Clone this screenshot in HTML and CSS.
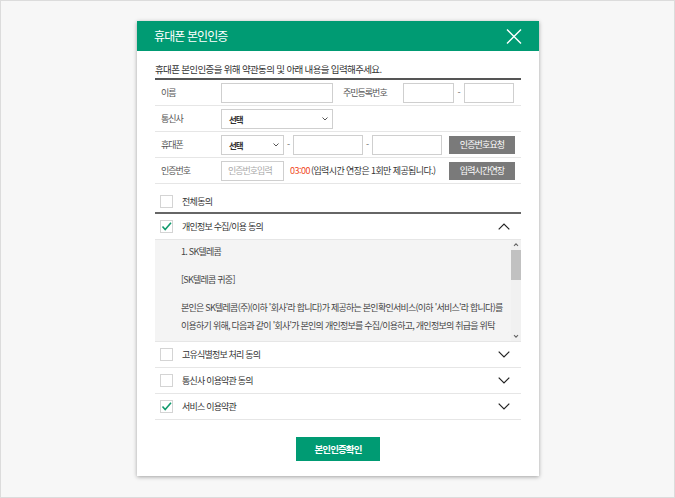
FILE: index.html
```html
<!DOCTYPE html>
<html lang="ko">
<head>
<meta charset="utf-8">
<title>휴대폰 본인인증</title>
<link rel="stylesheet" href="styles.css">
</head>
<body>
<div class="screen">
  <div class="modal">
    <div class="modal-head">
      <h1 class="modal-title">휴대폰 본인인증</h1>
      <button class="close" type="button" aria-label="닫기">
        <svg width="16" height="15" viewBox="0 0 16 15"><path d="M1 0.5L15 14.5M15 0.5L1 14.5" stroke="#fff" stroke-width="1.4" fill="none"/></svg>
      </button>
    </div>
    <div class="modal-body">
      <p class="intro">휴대폰 본인인증을 위해 약관동의 및 아래 내용을 입력해주세요.</p>
      <div class="form">
        <div class="row">
          <span class="label">이름</span>
          <input class="field w-name" type="text">
          <span class="label label-2">주민등록번호</span>
          <input class="field w-j1" type="text">
          <span class="dash dash-j">-</span>
          <input class="field w-j2" type="text">
        </div>
        <div class="row">
          <span class="label">통신사</span>
          <div class="select w-name"><span>선택</span>
            <svg width="6" height="4" viewBox="0 0 6 4"><path d="M0.5 0.5L3 3L5.5 0.5" stroke="#555" stroke-width="1" fill="none"/></svg>
          </div>
        </div>
        <div class="row">
          <span class="label">휴대폰</span>
          <div class="select w-sel"><span>선택</span>
            <svg width="6" height="4" viewBox="0 0 6 4"><path d="M0.5 0.5L3 3L5.5 0.5" stroke="#555" stroke-width="1" fill="none"/></svg>
          </div>
          <span class="dash">-</span>
          <input class="field w-ph" type="text">
          <span class="dash">-</span>
          <input class="field w-ph" type="text">
          <button class="gray-btn" type="button">인증번호요청</button>
        </div>
        <div class="row">
          <span class="label">인증번호</span>
          <input class="field w-sel" type="text" placeholder="인증번호입력">
          <span class="timer">03:00</span>
          <span class="note">(입력시간 연장은 1회만 제공됩니다.)</span>
          <button class="gray-btn push" type="button">입력시간연장</button>
        </div>
      </div>

      <div class="agree-all">
        <span class="check"></span>
        <span class="agree-text">전체동의</span>
      </div>

      <div class="term">
        <span class="check">
          <svg width="11" height="11" viewBox="0 0 11 11"><path d="M1.5 5.5L4.2 8.6L10 1.8" stroke="#139b6e" stroke-width="1.6" fill="none"/></svg>
        </span>
        <span class="term-text">개인정보 수집/이용 동의</span>
        <svg class="chev" width="12" height="7" viewBox="0 0 12 7"><path d="M0.7 6.3L6 1L11.3 6.3" stroke="#222" stroke-width="1.2" fill="none"/></svg>
      </div>
      <div class="term-content">
        <div class="term-scroll">
          <p>1. SK텔레콤</p>
          <p>[SK텔레콤 귀중]</p>
          <p>본인은 SK텔레콤(주)(이하 '회사'라 합니다)가 제공하는 본인확인서비스(이하 '서비스'라 합니다)를<br>이용하기 위해, 다음과 같이 '회사'가 본인의 개인정보를 수집/이용하고, 개인정보의 취급을 위탁</p>
        </div>
        <div class="scrollbar" aria-hidden="true">
          <svg class="sb-btn" width="10" height="10" viewBox="0 0 10 10"><path d="M3 5.8L5 3.8L7 5.8" stroke="#666" stroke-width="1.1" fill="none"/></svg>
          <div class="sb-thumb"></div>
          <div class="sb-track"></div>
          <svg class="sb-btn" width="10" height="10" viewBox="0 0 10 10"><path d="M3 4.2L5 6.2L7 4.2" stroke="#666" stroke-width="1.1" fill="none"/></svg>
        </div>
      </div>

      <div class="term">
        <span class="check"></span>
        <span class="term-text">고유식별정보 처리 동의</span>
        <svg class="chev" width="12" height="7" viewBox="0 0 12 7"><path d="M0.7 0.7L6 6L11.3 0.7" stroke="#222" stroke-width="1.2" fill="none"/></svg>
      </div>
      <div class="term">
        <span class="check"></span>
        <span class="term-text">통신사 이용약관 동의</span>
        <svg class="chev" width="12" height="7" viewBox="0 0 12 7"><path d="M0.7 0.7L6 6L11.3 0.7" stroke="#222" stroke-width="1.2" fill="none"/></svg>
      </div>
      <div class="term">
        <span class="check">
          <svg width="11" height="11" viewBox="0 0 11 11"><path d="M1.5 5.5L4.2 8.6L10 1.8" stroke="#139b6e" stroke-width="1.6" fill="none"/></svg>
        </span>
        <span class="term-text">서비스 이용약관</span>
        <svg class="chev" width="12" height="7" viewBox="0 0 12 7"><path d="M0.7 0.7L6 6L11.3 0.7" stroke="#222" stroke-width="1.2" fill="none"/></svg>
      </div>

      <div class="actions">
        <button class="confirm" type="button">본인인증확인</button>
      </div>
    </div>
  </div>
</div>
</body>
</html>
```

FILE: styles.css
```css
* { box-sizing: border-box; }
html, body { margin: 0; padding: 0; }
body {
  font-family: "Noto Sans CJK KR", "Noto Sans", sans-serif;
  color: #333;
}
.screen {
  width: 675px;
  height: 498px;
  border: 1px solid #dcdcdc;
  background: #f7f7f7;
  padding: 20px 0 0 136px;
}
.modal {
  width: 402px;
  background: #fff;
  box-shadow: 0 1px 4px rgba(0, 0, 0, 0.35);
}
.modal-head {
  height: 30px;
  background: #009b73;
  display: flex;
  align-items: center;
  justify-content: space-between;
  padding: 0 17px;
}
.modal-title {
  margin: 0;
  font-size: 12px;
  font-weight: 400;
  letter-spacing: -0.9px;
  color: #fff;
  line-height: 30px;
}
.close {
  border: 0;
  padding: 0;
  background: none;
  width: 16px;
  height: 15px;
  display: flex;
}
.modal-body {
  padding: 0 18px 15px;
}
.intro {
  margin: 10px 0 0;
  font-size: 9.5px;
  letter-spacing: -0.65px;
  line-height: 16px;
  padding-bottom: 1px;
  border-bottom: 2px solid #555;
  color: #333;
}
.row {
  display: flex;
  align-items: center;
  height: 26px;
  border-bottom: 1px solid #e6e6e6;
  font-size: 9px;
  letter-spacing: -0.8px;
}
.label {
  flex: none;
  width: 66px;
  padding-left: 6px;
  color: #555;
  letter-spacing: -1px;
}
.label-2 { margin-left: 4px; }
.field {
  flex: none;
  height: 20px;
  border: 1px solid #cfcfcf;
  background: #fff;
  padding: 0 6px;
  margin: 0;
  font-family: inherit;
  font-size: 9px;
  letter-spacing: -1px;
  color: #333;
  outline: none;
}
.field::placeholder { color: #aaa; }
.w-name { width: 112px; }
.w-j1 { width: 51px; }
.w-j2 { width: 50px; }
.w-sel { width: 63px; }
.w-ph { width: 70px; }
.dash {
  flex: none;
  width: 9px;
  text-align: center;
  color: #666;
  letter-spacing: 0;
}
.dash-j { width: 10px; }
.select {
  flex: none;
  height: 20px;
  border: 1px solid #cfcfcf;
  display: flex;
  align-items: center;
  justify-content: space-between;
  padding: 0 4px 0 7px;
  font-size: 8.5px;
  font-weight: 700;
  color: #333;
  letter-spacing: -1.1px;
}
.gray-btn {
  flex: none;
  width: 66px;
  height: 18px;
  margin-left: 7px;
  border: 0;
  padding: 0;
  background: #7a7a7a;
  color: #fff;
  font-family: inherit;
  font-size: 9px;
  letter-spacing: -0.9px;
}
.gray-btn.push { margin-left: auto; margin-right: 6px; }
.timer {
  margin-left: 6px;
  color: #f04a24;
  letter-spacing: -0.5px;
}
.note {
  margin-left: 1px;
  color: #333;
  letter-spacing: -0.6px;
}
.agree-all {
  display: flex;
  align-items: center;
  height: 30px;
  padding: 6px 0 0 5px;
  border-bottom: 2px solid #666;
}
.check {
  flex: none;
  width: 13px;
  height: 13px;
  border: 1px solid #d4d4d4;
  background: #fff;
  margin-right: 9px;
  display: flex;
  align-items: center;
  justify-content: center;
}
.agree-text {
  font-size: 9px;
  letter-spacing: -0.7px;
  color: #333;
}
.term-text {
  font-size: 9px;
  letter-spacing: -0.8px;
  color: #333;
}
.term {
  display: flex;
  align-items: center;
  height: 26px;
  padding: 0 11px 0 5px;
  border-bottom: 1px solid #e6e6e6;
}
.chev { margin-left: auto; }
.term-content {
  display: flex;
  height: 102px;
  background: #f4f4f4;
  border-bottom: 1px solid #e6e6e6;
}
.term-scroll {
  flex: 1;
  min-width: 0;
  overflow: hidden;
  padding: 3px 0 0 26px;
  font-size: 9px;
  letter-spacing: -0.75px;
  line-height: 18px;
  color: #444;
}
.term-scroll p {
  margin: 0 0 10px;
  white-space: nowrap;
}
.scrollbar {
  flex: none;
  width: 10px;
  display: flex;
  flex-direction: column;
  background: #f1f1f1;
}
.sb-btn { flex: none; display: block; }
.sb-thumb {
  flex: none;
  height: 30px;
  background: #c1c1c1;
}
.sb-track { flex: 1; }
.actions {
  display: flex;
  justify-content: center;
  padding-top: 17px;
}
.confirm {
  width: 84px;
  height: 24px;
  border: 0;
  padding: 0;
  background: #009b73;
  color: #fff;
  font-family: inherit;
  font-size: 9.5px;
  font-weight: 700;
  letter-spacing: -0.9px;
}
```
